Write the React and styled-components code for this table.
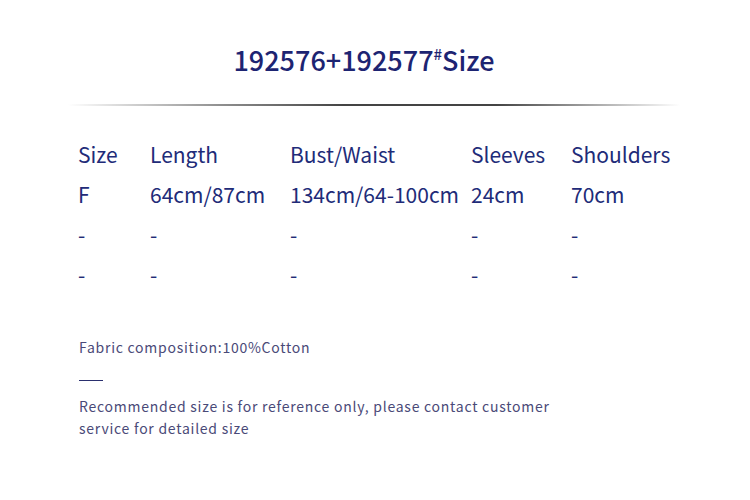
import React from 'react';
import styled, { createGlobalStyle } from 'styled-components';

const GlobalStyle = createGlobalStyle`
  body {
    margin: 0;
    background: #fff;
    font-family: "Noto Sans CJK SC", "Noto Sans", sans-serif;
  }
`;

const S = {
  Page: styled.div`
    width: 750px;
    height: 500px;
    box-sizing: border-box;
    padding: 43px 0 0;
    background: #fff;
    overflow: hidden;
  `,
  Title: styled.h1`
    margin: 0;
    padding-right: 22px;
    text-align: center;
    color: #1d2472;
    font-size: 27px;
    font-weight: 500;
    line-height: 34px;
  `,
  Sup: styled.sup`
    font-size: 15px;
    vertical-align: 11px;
    line-height: 0;
  `,
  Divider: styled.div`
    height: 2px;
    margin: 27px 70px 0 68px;
    background: linear-gradient(
      to right,
      rgba(68, 68, 68, 0) 0%,
      rgba(68, 68, 68, 0.6) 25%,
      #444 45%,
      #444 70%,
      rgba(68, 68, 68, 0.6) 82%,
      rgba(68, 68, 68, 0) 100%
    );
  `,
  Table: styled.div`
    display: grid;
    grid-template-columns: 72px 140px 181px 100px auto;
    margin: 28px 0 0 78px;
    color: #212b78;
    font-size: 21px;
    line-height: 40px;
  `,
  Cell: styled.div`
    white-space: nowrap;
  `,
  Note: styled.div`
    margin: 43px 0 0 79px;
    color: #4a4a78;
    font-size: 14px;
    letter-spacing: 0.75px;
    line-height: 20px;
  `,
  Rule: styled.div`
    width: 24px;
    height: 1px;
    margin: 23px 0 0 79px;
    background: #2a2f6e;
  `,
  Disclaimer: styled.p`
    width: 490px;
    margin: 14px 0 0 79px;
    color: #4a4a78;
    font-size: 14px;
    letter-spacing: 0.75px;
    line-height: 22px;
  `,
};

const rows = [
  ['Size', 'Length', 'Bust/Waist', 'Sleeves', 'Shoulders'],
  ['F', '64cm/87cm', '134cm/64-100cm', '24cm', '70cm'],
  ['-', '-', '-', '-', '-'],
  ['-', '-', '-', '-', '-'],
];

const App = () => (
  <S.Page>
    <GlobalStyle />
    <S.Title>
      192576+192577<S.Sup>#</S.Sup>Size
    </S.Title>
    <S.Divider />
    <S.Table>
      {rows.map((row, i) =>
        row.map((cell, j) => <S.Cell key={`${i}-${j}`}>{cell}</S.Cell>),
      )}
    </S.Table>
    <S.Note>Fabric composition:100%Cotton</S.Note>
    <S.Rule />
    <S.Disclaimer>
      Recommended size is for reference only, please contact customer service for detailed size
    </S.Disclaimer>
  </S.Page>
);

export default App;
